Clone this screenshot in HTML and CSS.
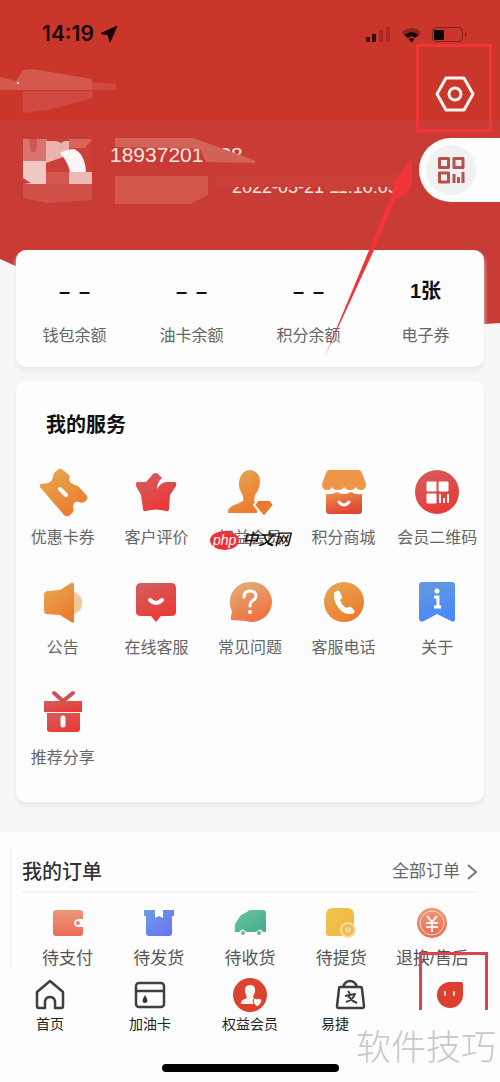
FILE: index.html
```html
<!DOCTYPE html>
<html lang="zh-CN">
<head>
<meta charset="utf-8">
<meta name="viewport" content="width=device-width, initial-scale=1">
<title>我的</title>
<link rel="stylesheet" href="styles.css">
</head>
<body>
<svg class="defs" aria-hidden="true">
  <defs>
    <linearGradient id="orange" x1="0" y1="0" x2="0.6" y2="1"><stop offset="0" stop-color="#e3ad52"/><stop offset="1" stop-color="#ee7b2f"/></linearGradient>
    <linearGradient id="red" x1="0" y1="0" x2="0.5" y2="1"><stop offset="0" stop-color="#d3605f"/><stop offset="1" stop-color="#ea3a38"/></linearGradient>
    <linearGradient id="shop" x1="0" y1="0" x2="0.4" y2="1"><stop offset="0" stop-color="#ee9547"/><stop offset="1" stop-color="#df4636"/></linearGradient>
    <linearGradient id="peach" x1="0" y1="0" x2="0.4" y2="1"><stop offset="0" stop-color="#e3b27c"/><stop offset="1" stop-color="#ee7444"/></linearGradient>
    <linearGradient id="blue" x1="0" y1="0" x2="0.3" y2="1"><stop offset="0" stop-color="#639bdc"/><stop offset="1" stop-color="#4b88f8"/></linearGradient>
    <linearGradient id="wallet" x1="0" y1="0" x2="0" y2="1"><stop offset="0" stop-color="#ee9874"/><stop offset="1" stop-color="#ec6b5b"/></linearGradient>
    <linearGradient id="violet" x1="0" y1="0" x2="1" y2="1"><stop offset="0" stop-color="#6a9fe0"/><stop offset="1" stop-color="#6b70f5"/></linearGradient>
    <linearGradient id="green" x1="0" y1="0" x2="1" y2="1"><stop offset="0" stop-color="#62c6a0"/><stop offset="1" stop-color="#4bac87"/></linearGradient>
    <linearGradient id="yellow" x1="0" y1="0" x2="1" y2="1"><stop offset="0" stop-color="#edc451"/><stop offset="1" stop-color="#f3b53b"/></linearGradient>
  </defs>
</svg>
<div class="app">
  <header class="hero">
    <svg class="smudges" width="420" height="220" viewBox="0 0 420 220" aria-hidden="true">
      <path d="M0 77l16 4 7-11 10-1 59 10 1 11H0z" fill="#d4594d"/>
      <path d="M92 82l24 2v6H92z" fill="#d0483f"/>
      <path d="M23 91h70v7l-45 12-25 3z" fill="#d04a41"/>
      <circle cx="18" cy="83" r="1" fill="#fff"/>
    </svg>
    <div class="status">
      <span class="time">14:19</span>
      <svg width="18" height="18" viewBox="0 0 18 18"><path d="M17 1L1 8.500l7 1.300L10 17z" fill="#160605" stroke="#160605" stroke-linejoin="round"/></svg>
      <svg class="signal" width="104" height="20" viewBox="0 0 104 20">
        <path d="M2 13h4v5H2z" fill="#4a0e0a"/><path d="M8 10h4v8H8z" fill="#250504"/><path d="M15 6h4v12h-4zM22 3h4v15h-4z" fill="#a72b27"/>
        <path d="M38 8q10-8 19 0l-2 3q-8-6-15 0z" fill="#8d241f"/><path d="M40.500 11q7-6 14 0l-3 3q-4-3-8 0zM44.500 15q3-2 6 0l-3 3.500z" fill="#180403"/>
        <rect x="68.500" y="3.500" width="30" height="14" rx="4" fill="none" stroke="#82221e"/><path d="M71 6h8q1 0 1 1v8q0 1-1 1h-8q-1 0-1-1V7q0-1 1-1z" fill="#0f0202"/><path d="M101 8q3 2 0 5z" fill="#82221e"/>
      </svg>
    </div>
    <div class="actions">
      <button class="plain" aria-label="设置">
        <svg width="40" height="36" viewBox="0 0 40 36" fill="none" stroke="#fff4ef" stroke-width="3" stroke-linejoin="round"><path d="M11 2h18l9 16-9 16H11L2 18z"/><circle cx="20" cy="18" r="6"/></svg>
      </button>
    </div>
    <div class="profile">
      <svg class="avatar" width="70" height="66" viewBox="0 0 70 66" aria-hidden="true">
        <path d="M1 1h69v53H1z" fill="#cc4039"/><path d="M1 1h24v23H1z" fill="#d9736d"/><path d="M47 1h23l-7 9H47z" fill="#d9655e"/>
        <path d="M1 23h23v23H1z" fill="#efc8c5"/><path d="M24 3h23v14l-23 8z" fill="#eab3ae"/>
        <path d="M24 34h23v12H24z" fill="#d15750"/><path d="M47 34h23v12H47z" fill="#ecb9b3"/>
        <path d="M38 15q8-4 14-4 11 5 12 23H48q-2-10-10-19z" fill="#fdf5f6"/><path d="M7 1l2 14 5-2 1-12z" fill="#cf5753"/><path d="M1 40l8 5-8 1zM27 0h21l-9 5z" fill="#ca4039"/>
        <path d="M1 46h69v16l-45 3-24-5z" fill="#d0514a"/>
      </svg>
      <div class="who">
        <p class="phone"><span>18937201</span><span>38</span></p>
        <p class="date">2022-05-21 11:10:05</p>
        <svg class="mask" width="300" height="70" viewBox="0 0 300 70" aria-hidden="true">
          <path d="M5 0h78l55 20 8 3-2 2-48-1-6-13L5 9z" fill="#d36359"/>
          <path d="M5 38h93v19l-18 9H5z" fill="#d2564c"/><path d="M105 37h190v12H105z" fill="#ca3f38"/>
          <path d="M215 47h30v6h-30z" fill="#ca3f38"/>
        </svg>
      </div>
      <button class="qr" aria-label="会员二维码">
        <span><svg width="28" height="28" viewBox="0 0 28 28" fill="none" stroke="#b9504b" stroke-width="3" stroke-linejoin="round"><path d="M2.500 2.500h9v9h-9zM17 2.500h9v9h-9zM2.500 17h9v9h-9zM17 18v9M21.500 21v6M26 16v11"/></svg></span>
      </button>
    </div>
  </header>

  <main>
    <section class="card stats">
      <div><p class="value"><span>–</span><span>–</span></p><p class="label">钱包余额</p></div>
      <div><p class="value"><span>–</span><span>–</span></p><p class="label">油卡余额</p></div>
      <div><p class="value"><span>–</span><span>–</span></p><p class="label">积分余额</p></div>
      <div><p class="value">1张</p><p class="label">电子券</p></div>
    </section>

    <section class="card services">
      <h2>我的服务</h2>
      <nav class="grid">
        <a href="#"><svg viewBox="0 0 46 46"><path d="M0 18q-1-2 1-3l7-1q5-2 5-7l1-3 5-4q2-1 4 1l7 6q-2 4 1 7 3 2 7 3l9 10q1 2-1 5-4 3-7 1-6-1-6 5 1 4 0 5l-4 4q-3 1-5-1z" fill="url(#orange)"/><path d="M20 20l6 6" stroke="#fff" stroke-width="4" stroke-linecap="round"/></svg>优惠卡券</a>
        <a href="#"><svg viewBox="0 0 46 46"><path d="M23 4q2 0 3 2l3 3q-5 4-5 11 4-7 10-7h8q2 0 1 4l-6 9-1 14q0 3-3 2-10-3-20 0-3 1-3-2L8 26 3 17q-1-4 2-4h8l7-8q1-1 3-1z" fill="url(#red)"/></svg>客户评价</a>
        <a href="#"><svg viewBox="0 0 46 46"><path d="M23 1q9 1 10 10 0 9-5 15l-1 6 3 3v9H1q-1-6 9-9l6-3q1-4-1-7-5-7-2-16 3-8 10-8z" fill="url(#orange)"/><path d="M31 31h12l4 5-10 12-10-12z" fill="#e9792f" stroke="#fff" stroke-width="2" stroke-linejoin="round"/></svg>权益会员</a>
        <a href="#"><svg viewBox="0 0 46 46"><path d="M9 1h28q3 0 4 3l4 11q0 6-5 6-4 0-5-3-2 3-6 3t-6-3q-1 3-6 3t-6-3q-1 3-5 3-5 0-5-6L5 4q1-3 4-3z" fill="#ee9547"/><path d="M5 25q6 1 11-2 7 4 14 0 5 3 11 2v17q0 3-3 3H8q-3 0-3-3z" fill="url(#shop)"/><path d="M18 33q5 6 10 0" fill="none" stroke="#fff" stroke-width="3" stroke-linecap="round"/></svg>积分商城</a>
        <a href="#"><svg viewBox="0 0 46 46"><circle cx="23" cy="23" r="22" fill="url(#red)"/><path d="M13 13h9v9h-9zM25 13h9v9h-9zM13 25h9v9h-9z" fill="#fff" stroke="#fff" stroke-linejoin="round"/><path d="M26 25v9M30 29v5M34 25v9" stroke="#fff" stroke-width="2"/></svg>会员二维码</a>
        <a href="#"><svg viewBox="0 0 46 46"><path d="M30 12q12 2 12 12t-12 12z" fill="#f0c795"/><path d="M4 14l3-2 13-1L31 4q3-1 3 2v36q0 3-3 1l-11-7-14-1q-2-1-2-4z" fill="url(#orange)"/></svg>公告</a>
        <a href="#"><svg viewBox="0 0 46 46"><path d="M8 4h30q5 0 5 5v24q0 4-5 4H28l-5 6-5-6H8q-5 0-5-4V9q0-5 5-5z" fill="url(#red)"/><path d="M17 21q6 6 12 0" fill="none" stroke="#fff" stroke-width="4" stroke-linecap="round"/></svg>在线客服</a>
        <a href="#"><svg viewBox="0 0 46 46"><path d="M23 3a20 20 0 1 1-4 39L5 41q-2 0-1-3l1-6A20 20 0 0 1 23 3z" fill="url(#peach)"/><path d="M17 18q0-6 6-6t6 5q0 3-4 5-2 2-2 5" fill="none" stroke="#fff" stroke-width="3" stroke-linecap="round"/><circle cx="23" cy="33" r="2" fill="#fff"/></svg>常见问题</a>
        <a href="#"><svg viewBox="0 0 46 46"><circle cx="23" cy="23" r="20" fill="url(#orange)"/><path d="M13 14q4-4 6-1l2 5q0 2-2 3 2 6 7 8 2-2 4-1l3 3q2 3-3 4-8 1-13-7-5-7-4-14z" fill="#fff"/></svg>客服电话</a>
        <a href="#"><svg viewBox="0 0 46 46"><path d="M8 3h30q3 0 3 3v34q0 4-4 2l-14-7-13 7q-4 2-5-2V6q0-3 3-3z" fill="url(#blue)"/><circle cx="23" cy="12" r="2.500" fill="#fff"/><path d="M20 18h4v10M20 28h7" fill="none" stroke="#fff" stroke-width="3"/></svg>关于</a>
        <a href="#"><svg viewBox="0 0 46 46"><path d="M14 4l9 8 10-8" fill="none" stroke="#c95253" stroke-width="4" stroke-linecap="round"/><path d="M4 12h38v11H4z" fill="url(#red)"/><path d="M7 24h33v16q0 3-3 3H10q-3 0-3-3z" fill="url(#red)"/><path d="M23 29v7" stroke="#fff" stroke-width="5" stroke-linecap="round"/></svg>推荐分享</a>
      </nav>
    </section>

    <section class="orders">
      <div class="inner">
        <div class="head">
          <h2>我的订单</h2>
          <a href="#">全部订单<svg width="12" height="18" viewBox="0 0 12 18" fill="none" stroke="#777" stroke-width="2"><path d="M2 2l8 7-8 7"/></svg></a>
        </div>
        <nav class="grid">
          <a href="#"><svg viewBox="0 0 36 36"><path d="M6 5h24q3 0 3 3v6h-5q-4 1-4 4t4 4h5v6q0 3-3 3H6q-3 0-3-3V8q0-3 3-3z" fill="url(#wallet)"/><circle cx="28" cy="18" r="2" fill="#ed806b"/></svg>待支付</a>
          <a href="#"><svg viewBox="0 0 36 36"><path d="M3 5h11v8l4-2 4 2V5h11v6h-2v17q0 3-3 3H8q-3 0-3-3V11H3z" fill="url(#violet)"/></svg>待发货</a>
          <a href="#"><svg viewBox="0 0 36 36"><path d="M15 7q1-2 4-2h12q3 0 3 3v19h-3q-2-5-7 0H14q-3-5-7 0H3q-1-8 2-11l4-6z" fill="url(#green)"/><circle cx="11" cy="28" r="2" fill="#5ebd98"/><circle cx="27" cy="28" r="2" fill="#5ebd98"/></svg>待收货</a>
          <a href="#"><svg viewBox="0 0 36 36"><path d="M9 3h16q6 1 6 7v21H6q-3 0-3-3V9q1-6 6-6z" fill="url(#yellow)"/><circle cx="25" cy="25" r="7" fill="#efbd56" stroke="#f8df9d" stroke-width="2"/><circle cx="25" cy="25" r="3" fill="#f5d58a"/></svg>待提货</a>
          <a href="#"><svg viewBox="0 0 36 36"><circle cx="18" cy="18" r="15" fill="url(#wallet)"/><circle cx="18" cy="18" r="12" fill="none" stroke="#fbd8c9"/><path d="M13 11l5 6 5-6M12 18h12M12 22h12M18 17v10" fill="none" stroke="#fff0e8" stroke-width="2"/></svg>退换/售后</a>
        </nav>
      </div>
    </section>
  </main>

  <nav class="tabs">
    <a href="#"><svg viewBox="0 0 34 34" fill="none" stroke="#3f3f3f" stroke-width="2.500" stroke-linejoin="round"><path d="M4 14L17 3l13 11v14q0 2-2 2h-6v-7q-1-4-5-4t-5 4v7H6q-2 0-2-2z"/></svg>首页</a>
    <a href="#"><svg viewBox="0 0 34 34" fill="none" stroke="#3f3f3f" stroke-width="2.500"><rect x="3" y="5" width="28" height="24" rx="3"/><path d="M3 13h28"/><path d="M12 17q5 8 0 8t0-8z" fill="#333" stroke="none"/></svg>加油卡</a>
    <a href="#"><svg viewBox="0 0 34 34"><circle cx="17" cy="17" r="17" fill="#dc432f"/><path d="M17 7q6 0 5 7l-2 5 2 3v4H8q-1-4 6-6l-2-6q-1-7 5-7z" fill="#fff4f1"/><path d="M20 22l2-2 2 1 2-1 3 2q0 4-5 7-4-3-4-7z" fill="#fff" stroke="#dc432f"/></svg>权益会员</a>
    <a href="#" class="shop"><svg viewBox="0 0 34 34" fill="none" stroke="#3f3f3f" stroke-width="2.500" stroke-linejoin="round"><path d="M7 9h20q2 0 2 2l2 17q0 2-2 2H6q-2 0-2-2l2-17q0-2 1-2zM10 9q2-6 7-6t7 6"/><path d="M15 13l2 3M12 18l10-2q-2 6-9 8M15 18l5 5 4 2" stroke-width="2"/></svg><span>易捷</span></a>
    <a href="#" aria-label="我的"><svg viewBox="0 0 34 34"><path d="M17 4h11q2 0 2 2v11A13 13 0 1 1 17 4z" fill="#dd4033"/><path d="M12 14v3M21 14v3" stroke="#ffddbd" stroke-width="2" stroke-linecap="round"/></svg></a>
  </nav>
  <div class="indicator"></div>

  <div class="mark mark-top"></div>
  <div class="mark mark-bottom"></div>
  <svg class="arrow" width="92" height="204" viewBox="0 0 92 204" aria-hidden="true"><path d="M1 203L46 95l22-54 3-14 17-22v28l-8 9-9 5L50 97z" fill="#f23338"/></svg>
  <div class="site"><b>php</b><i>中文网</i></div>
  <div class="watermark">软件技巧</div>
</div>
</body>
</html>
```

FILE: styles.css
```css
* { box-sizing: border-box; }
body {
  margin: 0;
  background: #f7f7f7;
  color: #666;
  font-family: "Liberation Sans", "Noto Sans CJK SC", sans-serif;
}
h2, p { margin: 0; }
a { color: inherit; text-decoration: none; }
button { border: 0; padding: 0; background: none; cursor: pointer; }
svg { display: block; flex: none; }
.defs { position: absolute; width: 0; height: 0; }
.app { position: relative; overflow: hidden; }

.hero { position: relative; padding-bottom: 46px; }
.hero::before {
  content: "";
  position: absolute;
  inset: 0 0 -76px;
  background: linear-gradient(#cb362b 120px, #c93c35 120px);
  clip-path: polygon(0 0, 100% 0, 100% 323px, 94% 325px, 94% 280px, 20px 268px, 0 259px);
}
.hero > div { position: relative; }
.smudges { position: absolute; left: 0; top: 0; }
.status { display: flex; align-items: center; gap: 6px; height: 68px; padding: 0 32px 0 42px; }
.time { color: #160605; font: 600 21px/24px Inter, sans-serif; }
.signal { margin-left: auto; }
.actions { display: flex; justify-content: flex-end; padding: 8px 25px 26px; }
.profile { display: flex; align-items: flex-start; padding-left: 22px; }
.who { position: relative; flex: 1; padding-left: 18px; color: #fbe9e4; }
.phone { display: flex; gap: 16px; padding-top: 4px; font: 21px/26px "Liberation Sans", sans-serif; }
.date { padding: 8px 0 0 122px; font-size: 18px; line-height: 22px; white-space: nowrap; }
.mask { position: absolute; left: 18px; top: 0; }
.qr {
  display: flex;
  align-items: center;
  width: 81px;
  height: 64px;
  padding-left: 7px;
  border-radius: 32px 0 0 32px;
  background: #fdfdfd;
}
.qr span { padding: 11px; border-radius: 50%; background: #f1f1f1; }

main { position: relative; }
.card { margin: 0 16px 14px; border-radius: 10px; background: #fdfdfd; box-shadow: 0 4px 4px #eaeaea; }
.stats { display: grid; grid-template-columns: repeat(4, 1fr); padding: 28px 0 20px; text-align: center; }
.value { display: flex; justify-content: center; gap: 9px; color: #111; font-size: 20px; font-weight: 700; line-height: 26px; }
.label { margin-top: 21px; font-size: 16px; line-height: 22px; }
.services { padding: 28px 0 33px; }
h2 { font-size: 20px; line-height: 32px; color: #111; font-weight: 700; }
.services h2 { padding: 0 30px 28px; }
.grid { display: grid; grid-template-columns: repeat(5, 1fr); row-gap: 30px; }
.grid a { display: flex; flex-direction: column; align-items: center; gap: 12px; font-size: 16px; line-height: 22px; white-space: nowrap; }
.grid svg { width: 46px; height: 46px; overflow: visible; }

.orders { margin-top: 30px; padding: 16px 10px 0; background: #fdfdfd; }
.inner { padding: 8px 12px 0 10px; border-left: 2px solid #f5f5f5; }
.head { display: flex; justify-content: space-between; align-items: center; padding-bottom: 3px; border-bottom: 2px solid #f2f2f2; }
.head h2 { color: #333; font-weight: 500; }
.head a { display: flex; align-items: center; gap: 6px; font-size: 17px; line-height: 22px; }
.orders .grid { padding-top: 12px; }
.orders .grid a { gap: 7px; color: #555; font-size: 17px; }
.orders .grid svg { width: 36px; height: 36px; }

.tabs { display: grid; grid-template-columns: repeat(5, 1fr); padding: 8px 0 30px; background: #fdfdfd; }
.tabs a { display: flex; flex-direction: column; align-items: center; gap: 2px; color: #222; font-size: 14px; line-height: 20px; }
.tabs svg { width: 34px; height: 34px; }
.shop span { padding-right: 30px; }
.indicator { padding-bottom: 12px; background: #fdfdfd; }
.indicator::before { content: ""; display: block; width: 177px; height: 8px; margin: 0 auto; border-radius: 4px; background: #000; }

.mark { position: absolute; border: 3px solid #f13436; pointer-events: none; }
.mark-top { right: 8px; top: 44px; width: 76px; height: 88px; }
.mark-bottom { right: 12px; bottom: 74px; width: 69px; height: 58px; border-color: #d84550; border-bottom: 0; }
.arrow { position: absolute; right: 84px; top: 153px; pointer-events: none; }
.site { position: absolute; left: 50%; top: 530px; display: flex; align-items: center; gap: 3px; margin-left: -40px; line-height: 20px; pointer-events: none; }
.site b { padding: 0 3px; border-radius: 50%; background: #ef3038; color: #fff; font: italic 14px/19px "Liberation Sans", sans-serif; }
.site i { color: #111; font-size: 16px; font-weight: 500; }
.watermark { position: absolute; right: 4px; bottom: 12px; color: #c8c8c8; font-size: 35px; font-weight: 300; line-height: 48px; pointer-events: none; }
```
